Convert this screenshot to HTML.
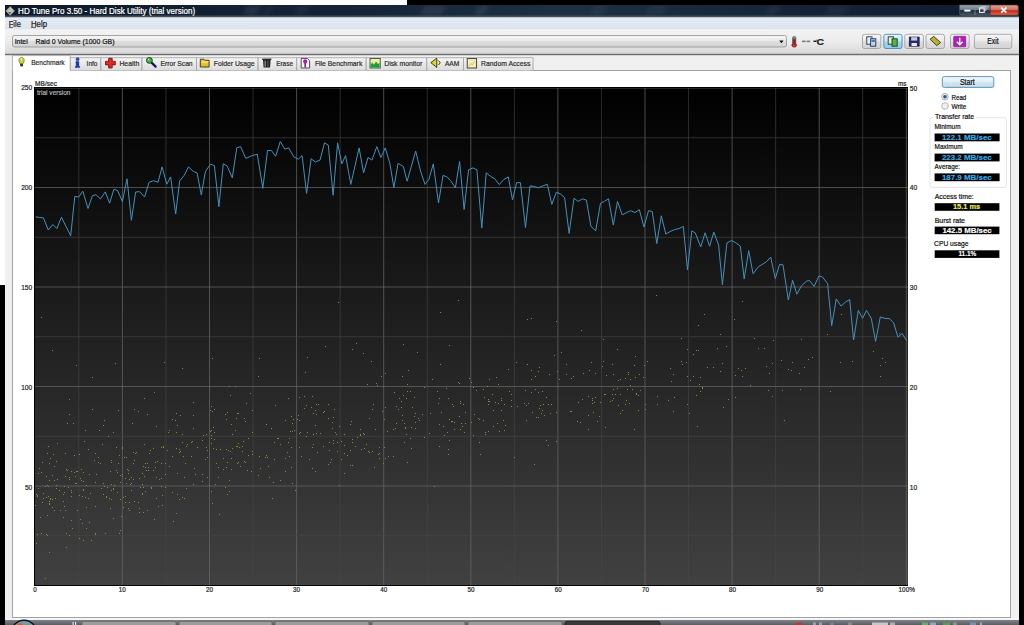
<!DOCTYPE html>
<html><head><meta charset="utf-8">
<style>
html,body{margin:0;padding:0;width:1024px;height:625px;overflow:hidden;background:#fff;}
svg text{font-family:"Liberation Sans",sans-serif;}
</style></head><body>
<svg width="1024" height="625" viewBox="0 0 1024 625" style="position:absolute;left:0;top:0">
<defs>
<linearGradient id="tb" x1="0" y1="0" x2="1" y2="0">
 <stop offset="0" stop-color="#0e1a2a"/><stop offset="0.35" stop-color="#15243a"/><stop offset="0.55" stop-color="#1e3044"/><stop offset="0.8" stop-color="#14233a"/><stop offset="1" stop-color="#101c2e"/>
</linearGradient>
<linearGradient id="menu" x1="0" y1="0" x2="0" y2="1"><stop offset="0" stop-color="#e4ebf3"/><stop offset="1" stop-color="#dbe3ec"/></linearGradient>
<linearGradient id="tool" x1="0" y1="0" x2="0" y2="1"><stop offset="0" stop-color="#f3f3f3"/><stop offset="0.5" stop-color="#ececec"/><stop offset="1" stop-color="#d9d9d9"/></linearGradient>
<linearGradient id="btn" x1="0" y1="0" x2="0" y2="1"><stop offset="0" stop-color="#f6f6f6"/><stop offset="0.5" stop-color="#e9e9e9"/><stop offset="0.51" stop-color="#dedede"/><stop offset="1" stop-color="#d2d2d2"/></linearGradient>
<linearGradient id="btnb" x1="0" y1="0" x2="0" y2="1"><stop offset="0" stop-color="#e5f4fc"/><stop offset="0.5" stop-color="#c4e5f6"/><stop offset="0.51" stop-color="#a9d9f2"/><stop offset="1" stop-color="#8fcaec"/></linearGradient>
<linearGradient id="tab" x1="0" y1="0" x2="0" y2="1"><stop offset="0" stop-color="#f4f4f4"/><stop offset="1" stop-color="#dcdcdc"/></linearGradient>
<linearGradient id="start" x1="0" y1="0" x2="0" y2="1"><stop offset="0" stop-color="#f2f8fb"/><stop offset="0.5" stop-color="#e0eef5"/><stop offset="0.51" stop-color="#d2e6f0"/><stop offset="1" stop-color="#c4dde9"/></linearGradient>
<linearGradient id="close" x1="0" y1="0" x2="0" y2="1"><stop offset="0" stop-color="#e0a8a0"/><stop offset="0.45" stop-color="#d07060"/><stop offset="0.55" stop-color="#c02c18"/><stop offset="1" stop-color="#d86a50"/></linearGradient>
<linearGradient id="capb" x1="0" y1="0" x2="0" y2="1"><stop offset="0" stop-color="#a0acb8"/><stop offset="0.45" stop-color="#6a7888"/><stop offset="0.55" stop-color="#1e2a38"/><stop offset="1" stop-color="#4a5868"/></linearGradient>
<linearGradient id="task" x1="0" y1="0" x2="0" y2="1"><stop offset="0" stop-color="#80848a"/><stop offset="1" stop-color="#5a5c60"/></linearGradient>
</defs>
<!-- background pieces -->
<rect x="407" y="0" width="617" height="5" fill="#000"/>
<rect x="1019" y="0" width="5" height="625" fill="#000"/>
<rect x="0" y="285" width="5" height="340" fill="#000"/>
<!-- window -->
<rect x="5" y="5" width="1014" height="614" fill="#f0f0f0"/>
<rect x="5" y="5" width="1014" height="11" fill="url(#tb)"/>
<rect x="5" y="15.5" width="1014" height="2" fill="#44525f"/>
<rect x="5" y="17.5" width="1014" height="12" fill="url(#menu)"/>
<rect x="5" y="29.5" width="1014" height="24" fill="url(#tool)"/>
<rect x="5" y="53.7" width="1014" height="1.4" fill="#6e6e6e"/>
<rect x="5" y="55.1" width="1014" height="0.8" fill="#d0d0d0"/>
<!-- title -->
<defs><filter id="bl" x="-50%" y="-50%" width="200%" height="200%"><feGaussianBlur stdDeviation="2"/></filter><clipPath id="tbc"><rect x="5" y="5" width="1014" height="10.5"/></clipPath></defs><g clip-path="url(#tbc)"><g filter="url(#bl)"><path d="M248 5 h14 l-6 10.5 h-14 z" fill="#fff" fill-opacity="0.07"/><path d="M268 5 h6 l-6 10.5 h-6 z" fill="#fff" fill-opacity="0.04"/><path d="M300 5 h10 l-6 10.5 h-10 z" fill="#fff" fill-opacity="0.04"/><path d="M425 5 h22 l-6 10.5 h-22 z" fill="#fff" fill-opacity="0.07"/><path d="M480 5 h10 l-6 10.5 h-10 z" fill="#fff" fill-opacity="0.07"/><path d="M595 5 h14 l-6 10.5 h-14 z" fill="#fff" fill-opacity="0.04"/><path d="M650 5 h18 l-6 10.5 h-18 z" fill="#fff" fill-opacity="0.04"/><path d="M770 5 h12 l-6 10.5 h-12 z" fill="#fff" fill-opacity="0.04"/><path d="M830 5 h20 l-6 10.5 h-20 z" fill="#fff" fill-opacity="0.04"/></g></g>
<path d="M10.2 6.3 L14.8 10.9 L10.2 15.6 L5.6 10.9 Z" fill="#a8b4c0"/><path d="M10.6 7.6 L13.6 10.6 L10.2 13.6 L7.6 11.2 Z" fill="#cfc2a8"/><path d="M8.2 12.2 L10.8 12 L10 13.8 Z" fill="#3a3020"/>
<text x="18.1" y="13.8" font-size="8.8" fill="#fff" textLength="177" lengthAdjust="spacingAndGlyphs" stroke="#fff" stroke-width="0.22">HD Tune Pro 3.50 - Hard Disk Utility (trial version)</text>
<!-- caption buttons -->
<path d="M959.5 5 H990.2 V15.3 H961.5 Q959.5 15.3 959.5 13.3 Z" fill="url(#capb)" stroke="#4a5868" stroke-width="0.7"/>
<line x1="975" y1="5.3" x2="975" y2="15" stroke="#8a98a8" stroke-width="0.7"/>
<rect x="964.3" y="9.6" width="6.2" height="2" fill="#f4f4f4"/>
<rect x="979.6" y="8" width="4.6" height="4.4" fill="none" stroke="#f0f0f0" stroke-width="1.1"/>
<path d="M981.4 8 V6.6 H986 V10.6 H984.2" fill="none" stroke="#d0d0d0" stroke-width="0.8"/>
<path d="M990.2 5 H1016.3 Q1018.3 5 1018.3 7 V13.3 Q1018.3 15.3 1016.3 15.3 H990.2 Z" fill="url(#close)" stroke="#5a3030" stroke-width="0.7"/>
<path d="M1001.2 7.6 L1006.4 12.6 M1006.4 7.6 L1001.2 12.6" stroke="#fff" stroke-width="1.7"/>
<!-- menu -->
<text x="8.8" y="26.6" font-size="8.2" fill="#222" textLength="12" lengthAdjust="spacingAndGlyphs" stroke="#222" stroke-width="0.22">File</text>
<text x="31" y="26.6" font-size="8.2" fill="#222" textLength="16" lengthAdjust="spacingAndGlyphs" stroke="#222" stroke-width="0.22">Help</text>
<rect x="9" y="27.2" width="4" height="0.7" fill="#333"/>
<rect x="31" y="27.2" width="5" height="0.7" fill="#333"/>
<!-- combo -->
<rect x="12.5" y="35.5" width="774" height="11.5" rx="2" fill="url(#btn)" stroke="#8e8f8f" stroke-width="0.8"/>
<text x="14.7" y="43.8" font-size="8" fill="#111" textLength="13" lengthAdjust="spacingAndGlyphs" stroke="#111" stroke-width="0.22">Intel</text>
<text x="35.5" y="43.8" font-size="8" fill="#111" textLength="79" lengthAdjust="spacingAndGlyphs" stroke="#111" stroke-width="0.22">Raid 0 Volume (1000 GB)</text>
<path d="M779.2 40.6 L783.6 40.6 L781.4 43.2 Z" fill="#111"/>
<!-- thermometer -->
<defs><linearGradient id="therm" x1="0" y1="0" x2="0" y2="1"><stop offset="0" stop-color="#9ab8b0"/><stop offset="0.35" stop-color="#3a4a48"/><stop offset="0.5" stop-color="#a02020"/><stop offset="1" stop-color="#c82020"/></linearGradient></defs>
<path d="M792.6 37.8 Q792.6 36.4 794.2 36.4 Q795.8 36.4 795.8 37.8 V43.6 Q797 44.6 796.6 45.8 Q796 47.2 794.2 47.2 Q792.2 47.2 791.8 45.6 Q791.6 44.4 792.6 43.6 Z" fill="url(#therm)" stroke="#402020" stroke-width="0.5"/>
<circle cx="793.8" cy="45.4" r="0.7" fill="#f06060"/>
<rect x="802" y="40.6" width="3.6" height="1.6" fill="#7a7a7a"/><rect x="806.6" y="40.6" width="3.6" height="1.6" fill="#7a7a7a"/>
<rect x="813.4" y="40.6" width="3" height="1.4" fill="#222"/><path d="M815.4 40.3 L816.6 39.6 L816.6 41 Z" fill="#222"/>
<text x="816.6" y="44.6" font-size="9.6" font-weight="bold" fill="#1a1a1a" textLength="7.6" lengthAdjust="spacingAndGlyphs" stroke="#1a1a1a" stroke-width="0.15">C</text>
<!-- toolbar buttons -->
<g stroke="#9a9a9a" stroke-width="0.8">
<rect x="862.5" y="34.3" width="18.3" height="14.2" rx="2" fill="url(#btn)"/>
<rect x="883.8" y="34.3" width="18.3" height="14.2" rx="2" fill="url(#btnb)" stroke="#3c7fb1"/>
<rect x="904.8" y="34.3" width="18.6" height="14.2" rx="2" fill="url(#btn)"/>
<rect x="926" y="34.3" width="18.5" height="14.2" rx="2" fill="url(#btn)"/>
<rect x="950.5" y="34.3" width="18.7" height="14.2" rx="2" fill="url(#btn)"/>
<rect x="974.4" y="34.3" width="37.4" height="14.2" rx="2" fill="url(#btn)"/>
</g>
<!-- icons in toolbar -->
<rect x="866.8" y="36.8" width="5.2" height="7.4" fill="#f0f4fa" stroke="#1e2e50" stroke-width="0.9"/>
<rect x="870.6" y="38.8" width="5.2" height="7.4" fill="#b8d4f0" stroke="#1e2e50" stroke-width="0.9"/>
<rect x="871.5" y="40" width="3.4" height="2" fill="#4a7ac0"/>
<rect x="888.2" y="36.8" width="5.2" height="7.4" fill="#e0f4d8" stroke="#1e3a20" stroke-width="0.9"/>
<rect x="892" y="38.8" width="5.2" height="7.4" fill="#5ab04a" stroke="#1e3a20" stroke-width="0.9"/>
<rect x="909.2" y="37" width="10" height="9.2" fill="#2a2a70" stroke="#101030" stroke-width="0.6"/>
<rect x="911.2" y="37.2" width="6" height="3.4" fill="#c8c8e0"/>
<rect x="911.5" y="43" width="5.4" height="3" fill="#e8e8f0"/>
<path d="M930 39.2 L933.8 36.4 L940.6 42.6 L936.8 45.6 Z" fill="#b8b030" stroke="#3a3410" stroke-width="0.9"/>
<rect x="953.6" y="36.2" width="12.2" height="10.6" rx="0.8" fill="#b020b8" stroke="#6a1070" stroke-width="0.5"/>
<path d="M959.7 37.8 V44.6 M956.8 41.8 L959.7 44.8 L962.6 41.8" stroke="#fff" stroke-width="1.4" fill="none"/>
<text x="987.3" y="44.3" font-size="8.5" fill="#111" textLength="11.2" lengthAdjust="spacingAndGlyphs" stroke="#111" stroke-width="0.22">Exit</text>
<!-- tab panel -->
<rect x="12.5" y="70.5" width="998" height="547" fill="#fff" stroke="#a2a2a2" stroke-width="1"/>
<!-- tabs -->
<g stroke="#a0a0a0" stroke-width="0.8" fill="url(#tab)">
<path d="M70.2 70.5 V57.7 H100.9 V70.5"/>
<path d="M100.9 70.5 V57.7 H142 V70.5"/>
<path d="M142 70.5 V57.7 H196.5 V70.5"/>
<path d="M196.5 70.5 V57.7 H258.1 V70.5"/>
<path d="M258.1 70.5 V57.7 H296.7 V70.5"/>
<path d="M296.7 70.5 V57.7 H366.2 V70.5"/>
<path d="M366.2 70.5 V57.7 H426.8 V70.5"/>
<path d="M426.8 70.5 V57.7 H463.5 V70.5"/>
<path d="M463.5 70.5 V57.7 H533.1 V70.5"/>
</g>
<path d="M12.5 71 V55.6 H70.2 V71" fill="#fff" stroke="#a2a2a2" stroke-width="0.8"/>
<rect x="13" y="69.5" width="56.8" height="2" fill="#fff"/>
<path d="M21.6 57.4 C24.4 57.4 24.8 60.8 23.6 62.6 L22.8 64 H20.4 L19.6 62.6 C18.4 60.8 18.8 57.4 21.6 57.4 Z" fill="#c8d040" stroke="#5a6010" stroke-width="0.6"/>
<path d="M20.6 58.6 C21.2 58.2 22 58.2 22.4 58.8 L21.2 61.5 Z" fill="#f0f4a0"/>
<rect x="20.2" y="63.8" width="2.8" height="2.6" rx="0.8" fill="#2e3410"/>
<circle cx="77.6" cy="59.2" r="1.6" fill="#3050c8" stroke="#102080" stroke-width="0.4"/>
<path d="M76 61.4 H78.9 V66.2 L79.8 66.6 V67.6 H75.2 V66.6 L76.1 66.2 V62.6 L75.6 62.2 Z" fill="#1838c0" stroke="#0a1870" stroke-width="0.4"/>
<path d="M108.6 58.3 h3.6 v3 h3.1 v3.6 h-3.1 v3.1 h-3.6 v-3.1 h-3.1 v-3.6 h3.1 z" fill="#e02828" stroke="#6a0c0c" stroke-width="0.8"/>
<path d="M151.6 62.6 L155.6 66.6" stroke="#101860" stroke-width="2.2" stroke-linecap="round"/>
<circle cx="149.4" cy="60.4" r="2.9" fill="#40b838" stroke="#0e3a18" stroke-width="0.9"/>
<circle cx="148.6" cy="59.6" r="0.9" fill="#b8f0a8"/>
<path d="M200.3 59.2 h3.6 l1 1 h4.2 v6.8 h-8.8 z" fill="#e0c028" stroke="#3a3008" stroke-width="0.9"/>
<rect x="201.2" y="61.2" width="7" height="2" fill="#f0dc70"/>
<path d="M262.2 58.6 H271.4 V60 H262.2 Z" fill="#2a2a2a"/>
<path d="M263 60 H270.6 L270 67.6 H263.6 Z" fill="#1e1e1e"/>
<rect x="264.6" y="60.6" width="1.2" height="6.2" fill="#9a9a9a"/><rect x="267.4" y="60.6" width="1" height="6.2" fill="#6a6a6a"/>
<path d="M301.2 58.4 H307.4 L309.6 60.6 V68 H301.2 Z" fill="#f4f4f4" stroke="#2a2a2a" stroke-width="0.8"/>
<ellipse cx="305.2" cy="61.4" rx="2.1" ry="2.2" fill="#a028a8"/><path d="M304.4 63 H306 V67.6 H304.4 Z" fill="#8a1890"/>
<rect x="370" y="58.4" width="10.2" height="9.6" fill="#f0f0a0" stroke="#2a3a2a" stroke-width="0.8"/>
<path d="M370.6 67.6 V64.6 L372.4 62.4 L374 64.8 L376 61.6 L378 64 L379.6 62.8 V67.6 Z" fill="#18a040"/>
<path d="M430.8 62.6 L436.8 58.2 V67.4 Z" fill="#d8d828" stroke="#2a2a08" stroke-width="0.9"/>
<path d="M438.6 60.6 L440.2 62.8 L438.6 65" stroke="#3a3a20" stroke-width="1" fill="none"/>
<rect x="467.2" y="58.6" width="9.4" height="9.4" fill="#f4ecc0" stroke="#3a3420" stroke-width="0.9"/>
<path d="M468.8 66.2 L470.8 63.6 L472.6 64.6 L475 61" stroke="#c8a838" stroke-width="0.7" fill="none"/>
<g font-size="8" fill="#2a2a2a" stroke="#2a2a2a" stroke-width="0.2">
<text x="31.2" y="65" textLength="33.5" lengthAdjust="spacingAndGlyphs">Benchmark</text>
<text x="86.6" y="66" textLength="10.9" lengthAdjust="spacingAndGlyphs">Info</text>
<text x="119.4" y="66" textLength="19.8" lengthAdjust="spacingAndGlyphs">Health</text>
<text x="160.5" y="66" textLength="32.1" lengthAdjust="spacingAndGlyphs">Error Scan</text>
<text x="213.8" y="66" textLength="40.8" lengthAdjust="spacingAndGlyphs">Folder Usage</text>
<text x="276.2" y="66" textLength="16.8" lengthAdjust="spacingAndGlyphs">Erase</text>
<text x="314.9" y="66" textLength="47.4" lengthAdjust="spacingAndGlyphs">File Benchmark</text>
<text x="384.2" y="66" textLength="38.1" lengthAdjust="spacingAndGlyphs">Disk monitor</text>
<text x="444.9" y="66" textLength="14.4" lengthAdjust="spacingAndGlyphs">AAM</text>
<text x="481.1" y="66" textLength="49.3" lengthAdjust="spacingAndGlyphs">Random Access</text>
</g>
<defs><linearGradient id="cg" x1="0" y1="0" x2="0" y2="1"><stop offset="0" stop-color="#000"/><stop offset="1" stop-color="#414141"/></linearGradient></defs>
<rect x="34" y="87" width="874" height="499" fill="url(#cg)"/>
<line x1="78.85" y1="87" x2="78.85" y2="586" stroke="#484848" stroke-opacity="0.6" stroke-width="1"/>
<line x1="122.40" y1="87" x2="122.40" y2="586" stroke="#666666" stroke-opacity="0.72" stroke-width="1"/>
<line x1="165.95" y1="87" x2="165.95" y2="586" stroke="#484848" stroke-opacity="0.6" stroke-width="1"/>
<line x1="209.50" y1="87" x2="209.50" y2="586" stroke="#666666" stroke-opacity="0.72" stroke-width="1"/>
<line x1="253.05" y1="87" x2="253.05" y2="586" stroke="#484848" stroke-opacity="0.6" stroke-width="1"/>
<line x1="296.60" y1="87" x2="296.60" y2="586" stroke="#666666" stroke-opacity="0.72" stroke-width="1"/>
<line x1="340.15" y1="87" x2="340.15" y2="586" stroke="#484848" stroke-opacity="0.6" stroke-width="1"/>
<line x1="383.70" y1="87" x2="383.70" y2="586" stroke="#666666" stroke-opacity="0.72" stroke-width="1"/>
<line x1="427.25" y1="87" x2="427.25" y2="586" stroke="#484848" stroke-opacity="0.6" stroke-width="1"/>
<line x1="470.80" y1="87" x2="470.80" y2="586" stroke="#666666" stroke-opacity="0.72" stroke-width="1"/>
<line x1="514.35" y1="87" x2="514.35" y2="586" stroke="#484848" stroke-opacity="0.6" stroke-width="1"/>
<line x1="557.90" y1="87" x2="557.90" y2="586" stroke="#666666" stroke-opacity="0.72" stroke-width="1"/>
<line x1="601.45" y1="87" x2="601.45" y2="586" stroke="#484848" stroke-opacity="0.6" stroke-width="1"/>
<line x1="645.00" y1="87" x2="645.00" y2="586" stroke="#666666" stroke-opacity="0.72" stroke-width="1"/>
<line x1="688.55" y1="87" x2="688.55" y2="586" stroke="#484848" stroke-opacity="0.6" stroke-width="1"/>
<line x1="732.10" y1="87" x2="732.10" y2="586" stroke="#666666" stroke-opacity="0.72" stroke-width="1"/>
<line x1="775.65" y1="87" x2="775.65" y2="586" stroke="#484848" stroke-opacity="0.6" stroke-width="1"/>
<line x1="819.20" y1="87" x2="819.20" y2="586" stroke="#666666" stroke-opacity="0.72" stroke-width="1"/>
<line x1="862.75" y1="87" x2="862.75" y2="586" stroke="#484848" stroke-opacity="0.6" stroke-width="1"/>
<line x1="906.30" y1="87" x2="906.30" y2="586" stroke="#666666" stroke-opacity="0.72" stroke-width="1"/>
<line x1="34" y1="535.75" x2="908" y2="535.75" stroke="#484848" stroke-opacity="0.6" stroke-width="1"/>
<line x1="34" y1="486.00" x2="908" y2="486.00" stroke="#666666" stroke-opacity="0.72" stroke-width="1"/>
<line x1="34" y1="436.25" x2="908" y2="436.25" stroke="#484848" stroke-opacity="0.6" stroke-width="1"/>
<line x1="34" y1="386.50" x2="908" y2="386.50" stroke="#666666" stroke-opacity="0.72" stroke-width="1"/>
<line x1="34" y1="336.75" x2="908" y2="336.75" stroke="#484848" stroke-opacity="0.6" stroke-width="1"/>
<line x1="34" y1="287.00" x2="908" y2="287.00" stroke="#666666" stroke-opacity="0.72" stroke-width="1"/>
<line x1="34" y1="237.25" x2="908" y2="237.25" stroke="#484848" stroke-opacity="0.6" stroke-width="1"/>
<line x1="34" y1="187.50" x2="908" y2="187.50" stroke="#666666" stroke-opacity="0.72" stroke-width="1"/>
<line x1="34" y1="137.75" x2="908" y2="137.75" stroke="#484848" stroke-opacity="0.6" stroke-width="1"/>
<line x1="34" y1="88.00" x2="908" y2="88.00" stroke="#666666" stroke-opacity="0.72" stroke-width="1"/>
<path d="M63 517h1v1h-1zM41 533h1v1h-1zM81 480h1v1h-1zM79 495h1v1h-1zM38 488h1v1h-1zM42 502h1v1h-1zM71 496h1v1h-1zM54 480h1v1h-1zM89 522h1v1h-1zM69 477h1v1h-1zM119 533h1v1h-1zM60 510h1v1h-1zM47 515h1v1h-1zM106 497h1v1h-1zM50 458h1v1h-1zM67 470h1v1h-1zM82 496h1v1h-1zM52 499h1v1h-1zM94 460h1v1h-1zM85 497h1v1h-1zM74 472h1v1h-1zM95 533h1v1h-1zM56 461h1v1h-1zM111 462h1v1h-1zM98 462h1v1h-1zM45 578h1v1h-1zM71 490h1v1h-1zM77 471h1v1h-1zM38 473h1v1h-1zM84 441h1v1h-1zM111 460h1v1h-1zM86 528h1v1h-1zM85 430h1v1h-1zM117 492h1v1h-1zM76 483h1v1h-1zM96 474h1v1h-1zM91 540h1v1h-1zM59 490h1v1h-1zM68 487h1v1h-1zM75 483h1v1h-1zM49 503h1v1h-1zM101 488h1v1h-1zM46 497h1v1h-1zM110 508h1v1h-1zM42 462h1v1h-1zM111 490h1v1h-1zM106 496h1v1h-1zM71 471h1v1h-1zM66 547h1v1h-1zM48 446h1v1h-1zM50 498h1v1h-1zM77 510h1v1h-1zM86 485h1v1h-1zM71 492h1v1h-1zM67 423h1v1h-1zM95 453h1v1h-1zM79 454h1v1h-1zM39 468h1v1h-1zM113 489h1v1h-1zM104 420h1v1h-1zM69 479h1v1h-1zM90 493h1v1h-1zM40 517h1v1h-1zM49 504h1v1h-1zM64 492h1v1h-1zM48 496h1v1h-1zM43 493h1v1h-1zM111 484h1v1h-1zM88 498h1v1h-1zM65 510h1v1h-1zM66 533h1v1h-1zM121 516h1v1h-1zM75 476h1v1h-1zM43 498h1v1h-1zM64 486h1v1h-1zM49 552h1v1h-1zM37 534h1v1h-1zM47 485h1v1h-1zM82 523h1v1h-1zM120 482h1v1h-1zM110 471h1v1h-1zM66 469h1v1h-1zM49 501h1v1h-1zM102 444h1v1h-1zM63 501h1v1h-1zM120 530h1v1h-1zM109 498h1v1h-1zM99 430h1v1h-1zM54 466h1v1h-1zM37 496h1v1h-1zM37 495h1v1h-1zM95 506h1v1h-1zM118 410h1v1h-1zM120 499h1v1h-1zM118 463h1v1h-1zM54 510h1v1h-1zM52 507h1v1h-1zM113 518h1v1h-1zM108 436h1v1h-1zM104 486h1v1h-1zM42 462h1v1h-1zM103 425h1v1h-1zM100 463h1v1h-1zM103 483h1v1h-1zM63 517h1v1h-1zM69 414h1v1h-1zM69 535h1v1h-1zM49 480h1v1h-1zM46 534h1v1h-1zM105 533h1v1h-1zM47 535h1v1h-1zM92 409h1v1h-1zM65 476h1v1h-1zM36 494h1v1h-1zM119 455h1v1h-1zM116 447h1v1h-1zM72 528h1v1h-1zM53 454h1v1h-1zM56 488h1v1h-1zM86 507h1v1h-1zM57 479h1v1h-1zM114 485h1v1h-1zM65 453h1v1h-1zM113 488h1v1h-1zM71 520h1v1h-1zM81 469h1v1h-1zM80 519h1v1h-1zM50 499h1v1h-1zM35 505h1v1h-1zM76 471h1v1h-1zM98 457h1v1h-1zM80 478h1v1h-1zM83 489h1v1h-1zM83 472h1v1h-1zM56 485h1v1h-1zM79 538h1v1h-1zM83 490h1v1h-1zM73 423h1v1h-1zM88 449h1v1h-1zM95 482h1v1h-1zM74 455h1v1h-1zM116 470h1v1h-1zM95 534h1v1h-1zM57 443h1v1h-1zM83 540h1v1h-1zM46 476h1v1h-1zM45 486h1v1h-1zM55 498h1v1h-1zM41 472h1v1h-1zM113 432h1v1h-1zM48 486h1v1h-1zM47 453h1v1h-1zM111 499h1v1h-1zM117 472h1v1h-1zM69 399h1v1h-1zM107 487h1v1h-1zM49 463h1v1h-1zM64 506h1v1h-1zM52 475h1v1h-1zM36 543h1v1h-1zM83 481h1v1h-1zM63 494h1v1h-1zM89 474h1v1h-1zM120 475h1v1h-1zM103 494h1v1h-1zM145 467h1v1h-1zM125 478h1v1h-1zM133 452h1v1h-1zM158 506h1v1h-1zM144 444h1v1h-1zM134 501h1v1h-1zM182 442h1v1h-1zM129 510h1v1h-1zM159 479h1v1h-1zM128 508h1v1h-1zM191 442h1v1h-1zM129 479h1v1h-1zM197 447h1v1h-1zM161 447h1v1h-1zM202 481h1v1h-1zM145 491h1v1h-1zM142 493h1v1h-1zM131 477h1v1h-1zM139 478h1v1h-1zM149 453h1v1h-1zM147 510h1v1h-1zM165 474h1v1h-1zM123 497h1v1h-1zM143 512h1v1h-1zM169 466h1v1h-1zM138 411h1v1h-1zM131 483h1v1h-1zM193 428h1v1h-1zM194 468h1v1h-1zM156 426h1v1h-1zM207 450h1v1h-1zM151 487h1v1h-1zM177 425h1v1h-1zM157 461h1v1h-1zM133 479h1v1h-1zM128 473h1v1h-1zM136 452h1v1h-1zM129 502h1v1h-1zM180 415h1v1h-1zM146 470h1v1h-1zM161 486h1v1h-1zM135 453h1v1h-1zM205 459h1v1h-1zM206 434h1v1h-1zM206 447h1v1h-1zM148 467h1v1h-1zM155 467h1v1h-1zM163 447h1v1h-1zM165 463h1v1h-1zM122 474h1v1h-1zM156 477h1v1h-1zM125 496h1v1h-1zM142 473h1v1h-1zM172 419h1v1h-1zM179 452h1v1h-1zM184 477h1v1h-1zM150 450h1v1h-1zM207 477h1v1h-1zM177 494h1v1h-1zM125 502h1v1h-1zM176 413h1v1h-1zM185 463h1v1h-1zM167 450h1v1h-1zM165 487h1v1h-1zM193 415h1v1h-1zM172 492h1v1h-1zM182 434h1v1h-1zM142 484h1v1h-1zM153 470h1v1h-1zM131 490h1v1h-1zM176 432h1v1h-1zM176 448h1v1h-1zM122 448h1v1h-1zM191 456h1v1h-1zM168 432h1v1h-1zM179 499h1v1h-1zM143 487h1v1h-1zM128 470h1v1h-1zM139 512h1v1h-1zM186 488h1v1h-1zM155 462h1v1h-1zM163 446h1v1h-1zM175 420h1v1h-1zM177 473h1v1h-1zM144 476h1v1h-1zM186 446h1v1h-1zM123 507h1v1h-1zM127 469h1v1h-1zM182 497h1v1h-1zM180 451h1v1h-1zM162 495h1v1h-1zM162 505h1v1h-1zM139 508h1v1h-1zM207 457h1v1h-1zM161 463h1v1h-1zM193 484h1v1h-1zM145 463h1v1h-1zM140 487h1v1h-1zM172 456h1v1h-1zM134 409h1v1h-1zM133 463h1v1h-1zM193 402h1v1h-1zM183 456h1v1h-1zM142 494h1v1h-1zM124 457h1v1h-1zM122 447h1v1h-1zM148 470h1v1h-1zM134 460h1v1h-1zM195 474h1v1h-1zM122 476h1v1h-1zM132 423h1v1h-1zM202 440h1v1h-1zM147 414h1v1h-1zM154 392h1v1h-1zM173 521h1v1h-1zM153 448h1v1h-1zM126 483h1v1h-1zM130 484h1v1h-1zM203 435h1v1h-1zM143 466h1v1h-1zM138 502h1v1h-1zM154 519h1v1h-1zM192 441h1v1h-1zM176 513h1v1h-1zM169 430h1v1h-1zM184 498h1v1h-1zM161 478h1v1h-1zM187 444h1v1h-1zM126 457h1v1h-1zM202 474h1v1h-1zM151 488h1v1h-1zM147 463h1v1h-1zM144 398h1v1h-1zM179 449h1v1h-1zM156 498h1v1h-1zM223 458h1v1h-1zM287 452h1v1h-1zM252 454h1v1h-1zM295 490h1v1h-1zM248 455h1v1h-1zM216 463h1v1h-1zM238 462h1v1h-1zM231 458h1v1h-1zM258 475h1v1h-1zM244 418h1v1h-1zM245 421h1v1h-1zM238 443h1v1h-1zM214 439h1v1h-1zM219 514h1v1h-1zM252 410h1v1h-1zM227 412h1v1h-1zM232 448h1v1h-1zM247 470h1v1h-1zM291 467h1v1h-1zM210 410h1v1h-1zM211 438h1v1h-1zM250 393h1v1h-1zM260 468h1v1h-1zM289 438h1v1h-1zM280 480h1v1h-1zM230 395h1v1h-1zM218 467h1v1h-1zM268 466h1v1h-1zM290 431h1v1h-1zM275 405h1v1h-1zM248 438h1v1h-1zM277 438h1v1h-1zM229 480h1v1h-1zM235 430h1v1h-1zM220 449h1v1h-1zM269 477h1v1h-1zM218 477h1v1h-1zM259 456h1v1h-1zM242 451h1v1h-1zM209 485h1v1h-1zM235 386h1v1h-1zM265 457h1v1h-1zM285 420h1v1h-1zM230 451h1v1h-1zM292 431h1v1h-1zM210 431h1v1h-1zM252 432h1v1h-1zM231 424h1v1h-1zM267 457h1v1h-1zM211 443h1v1h-1zM238 413h1v1h-1zM226 467h1v1h-1zM278 438h1v1h-1zM226 419h1v1h-1zM293 419h1v1h-1zM229 491h1v1h-1zM228 450h1v1h-1zM291 416h1v1h-1zM252 451h1v1h-1zM245 462h1v1h-1zM266 455h1v1h-1zM243 441h1v1h-1zM227 462h1v1h-1zM213 448h1v1h-1zM214 409h1v1h-1zM285 471h1v1h-1zM272 498h1v1h-1zM237 446h1v1h-1zM225 487h1v1h-1zM211 435h1v1h-1zM266 424h1v1h-1zM237 463h1v1h-1zM223 469h1v1h-1zM239 447h1v1h-1zM292 483h1v1h-1zM227 494h1v1h-1zM240 466h1v1h-1zM246 403h1v1h-1zM213 427h1v1h-1zM288 442h1v1h-1zM225 414h1v1h-1zM211 491h1v1h-1zM244 461h1v1h-1zM212 411h1v1h-1zM212 503h1v1h-1zM231 469h1v1h-1zM274 459h1v1h-1zM232 434h1v1h-1zM292 423h1v1h-1zM271 428h1v1h-1zM236 446h1v1h-1zM274 442h1v1h-1zM288 398h1v1h-1zM211 406h1v1h-1zM229 386h1v1h-1zM291 447h1v1h-1zM242 446h1v1h-1zM251 471h1v1h-1zM289 456h1v1h-1zM273 482h1v1h-1zM280 444h1v1h-1zM237 413h1v1h-1zM236 418h1v1h-1zM215 484h1v1h-1zM226 449h1v1h-1zM214 432h1v1h-1zM211 430h1v1h-1zM294 430h1v1h-1zM285 458h1v1h-1zM216 449h1v1h-1zM304 396h1v1h-1zM335 432h1v1h-1zM316 404h1v1h-1zM355 446h1v1h-1zM361 449h1v1h-1zM306 405h1v1h-1zM369 418h1v1h-1zM328 464h1v1h-1zM360 434h1v1h-1zM317 452h1v1h-1zM309 459h1v1h-1zM324 411h1v1h-1zM330 462h1v1h-1zM316 433h1v1h-1zM367 384h1v1h-1zM305 372h1v1h-1zM337 451h1v1h-1zM376 383h1v1h-1zM299 433h1v1h-1zM312 447h1v1h-1zM381 376h1v1h-1zM328 404h1v1h-1zM372 409h1v1h-1zM364 434h1v1h-1zM379 453h1v1h-1zM350 450h1v1h-1zM315 425h1v1h-1zM313 444h1v1h-1zM318 404h1v1h-1zM313 413h1v1h-1zM297 419h1v1h-1zM312 468h1v1h-1zM323 446h1v1h-1zM344 473h1v1h-1zM301 456h1v1h-1zM344 445h1v1h-1zM352 442h1v1h-1zM357 437h1v1h-1zM332 428h1v1h-1zM379 447h1v1h-1zM323 412h1v1h-1zM332 422h1v1h-1zM372 451h1v1h-1zM313 434h1v1h-1zM360 429h1v1h-1zM375 429h1v1h-1zM333 443h1v1h-1zM373 404h1v1h-1zM336 434h1v1h-1zM344 434h1v1h-1zM352 439h1v1h-1zM350 424h1v1h-1zM328 418h1v1h-1zM320 433h1v1h-1zM341 441h1v1h-1zM339 426h1v1h-1zM366 444h1v1h-1zM307 432h1v1h-1zM378 454h1v1h-1zM300 432h1v1h-1zM377 385h1v1h-1zM350 465h1v1h-1zM368 451h1v1h-1zM315 471h1v1h-1zM331 459h1v1h-1zM312 396h1v1h-1zM315 410h1v1h-1zM329 450h1v1h-1zM306 436h1v1h-1zM374 467h1v1h-1zM299 397h1v1h-1zM299 420h1v1h-1zM369 452h1v1h-1zM344 453h1v1h-1zM351 421h1v1h-1zM347 455h1v1h-1zM333 417h1v1h-1zM334 409h1v1h-1zM298 415h1v1h-1zM316 414h1v1h-1zM363 433h1v1h-1zM311 407h1v1h-1zM337 442h1v1h-1zM333 440h1v1h-1zM304 408h1v1h-1zM299 447h1v1h-1zM352 465h1v1h-1zM364 448h1v1h-1zM341 459h1v1h-1zM329 442h1v1h-1zM379 458h1v1h-1zM383 463h1v1h-1zM360 435h1v1h-1zM382 411h1v1h-1zM339 485h1v1h-1zM398 409h1v1h-1zM452 421h1v1h-1zM414 416h1v1h-1zM449 440h1v1h-1zM407 462h1v1h-1zM454 429h1v1h-1zM464 432h1v1h-1zM402 420h1v1h-1zM411 448h1v1h-1zM387 431h1v1h-1zM465 423h1v1h-1zM443 426h1v1h-1zM452 404h1v1h-1zM394 392h1v1h-1zM415 413h1v1h-1zM459 383h1v1h-1zM460 401h1v1h-1zM393 456h1v1h-1zM418 418h1v1h-1zM453 406h1v1h-1zM434 486h1v1h-1zM415 422h1v1h-1zM399 398h1v1h-1zM448 454h1v1h-1zM406 434h1v1h-1zM439 446h1v1h-1zM441 412h1v1h-1zM411 427h1v1h-1zM396 423h1v1h-1zM437 391h1v1h-1zM461 423h1v1h-1zM395 428h1v1h-1zM385 458h1v1h-1zM384 419h1v1h-1zM415 428h1v1h-1zM403 395h1v1h-1zM401 407h1v1h-1zM438 403h1v1h-1zM465 412h1v1h-1zM405 428h1v1h-1zM439 424h1v1h-1zM459 416h1v1h-1zM406 398h1v1h-1zM385 407h1v1h-1zM414 397h1v1h-1zM440 364h1v1h-1zM447 432h1v1h-1zM405 427h1v1h-1zM430 413h1v1h-1zM419 420h1v1h-1zM451 421h1v1h-1zM385 373h1v1h-1zM396 406h1v1h-1zM401 401h1v1h-1zM439 398h1v1h-1zM454 422h1v1h-1zM410 438h1v1h-1zM388 456h1v1h-1zM446 388h1v1h-1zM384 447h1v1h-1zM424 387h1v1h-1zM448 398h1v1h-1zM393 429h1v1h-1zM404 442h1v1h-1zM449 419h1v1h-1zM444 435h1v1h-1zM407 391h1v1h-1zM432 379h1v1h-1zM429 433h1v1h-1zM407 384h1v1h-1zM402 376h1v1h-1zM460 429h1v1h-1zM404 423h1v1h-1zM448 449h1v1h-1zM412 407h1v1h-1zM460 403h1v1h-1zM462 426h1v1h-1zM438 403h1v1h-1zM469 378h1v1h-1zM424 437h1v1h-1zM458 382h1v1h-1zM422 414h1v1h-1zM410 391h1v1h-1zM402 415h1v1h-1zM463 404h1v1h-1zM483 420h1v1h-1zM551 404h1v1h-1zM501 410h1v1h-1zM474 414h1v1h-1zM531 379h1v1h-1zM535 376h1v1h-1zM476 390h1v1h-1zM542 391h1v1h-1zM542 410h1v1h-1zM546 397h1v1h-1zM550 413h1v1h-1zM488 404h1v1h-1zM480 454h1v1h-1zM541 413h1v1h-1zM526 420h1v1h-1zM496 377h1v1h-1zM479 442h1v1h-1zM488 431h1v1h-1zM498 403h1v1h-1zM493 410h1v1h-1zM495 402h1v1h-1zM498 384h1v1h-1zM554 355h1v1h-1zM524 403h1v1h-1zM473 387h1v1h-1zM538 417h1v1h-1zM501 398h1v1h-1zM489 379h1v1h-1zM546 440h1v1h-1zM485 432h1v1h-1zM471 422h1v1h-1zM556 441h1v1h-1zM471 382h1v1h-1zM540 405h1v1h-1zM487 386h1v1h-1zM543 404h1v1h-1zM493 426h1v1h-1zM489 401h1v1h-1zM531 392h1v1h-1zM526 405h1v1h-1zM478 418h1v1h-1zM539 367h1v1h-1zM525 390h1v1h-1zM505 425h1v1h-1zM548 445h1v1h-1zM473 435h1v1h-1zM488 404h1v1h-1zM514 457h1v1h-1zM503 420h1v1h-1zM511 394h1v1h-1zM517 406h1v1h-1zM527 364h1v1h-1zM501 400h1v1h-1zM544 415h1v1h-1zM528 403h1v1h-1zM509 391h1v1h-1zM538 392h1v1h-1zM511 400h1v1h-1zM548 404h1v1h-1zM497 423h1v1h-1zM532 412h1v1h-1zM484 397h1v1h-1zM492 394h1v1h-1zM485 434h1v1h-1zM499 431h1v1h-1zM534 464h1v1h-1zM479 419h1v1h-1zM504 404h1v1h-1zM556 412h1v1h-1zM508 369h1v1h-1zM488 401h1v1h-1zM488 399h1v1h-1zM504 430h1v1h-1zM539 408h1v1h-1zM531 370h1v1h-1zM511 406h1v1h-1zM483 389h1v1h-1zM535 389h1v1h-1zM549 374h1v1h-1zM536 417h1v1h-1zM594 402h1v1h-1zM634 429h1v1h-1zM625 378h1v1h-1zM617 349h1v1h-1zM613 374h1v1h-1zM612 400h1v1h-1zM566 364h1v1h-1zM620 413h1v1h-1zM612 394h1v1h-1zM597 421h1v1h-1zM612 364h1v1h-1zM638 410h1v1h-1zM573 376h1v1h-1zM591 362h1v1h-1zM600 402h1v1h-1zM605 394h1v1h-1zM571 411h1v1h-1zM603 339h1v1h-1zM566 374h1v1h-1zM620 379h1v1h-1zM602 366h1v1h-1zM603 361h1v1h-1zM593 412h1v1h-1zM617 388h1v1h-1zM592 398h1v1h-1zM643 377h1v1h-1zM588 415h1v1h-1zM592 403h1v1h-1zM559 379h1v1h-1zM618 405h1v1h-1zM588 396h1v1h-1zM622 410h1v1h-1zM639 374h1v1h-1zM627 389h1v1h-1zM592 400h1v1h-1zM625 404h1v1h-1zM628 374h1v1h-1zM606 375h1v1h-1zM577 421h1v1h-1zM613 389h1v1h-1zM629 403h1v1h-1zM583 373h1v1h-1zM605 427h1v1h-1zM588 429h1v1h-1zM632 389h1v1h-1zM580 422h1v1h-1zM595 397h1v1h-1zM620 394h1v1h-1zM582 399h1v1h-1zM599 416h1v1h-1zM595 373h1v1h-1zM589 370h1v1h-1zM638 395h1v1h-1zM630 385h1v1h-1zM636 393h1v1h-1zM630 379h1v1h-1zM613 398h1v1h-1zM640 390h1v1h-1zM615 394h1v1h-1zM570 411h1v1h-1zM578 402h1v1h-1zM571 378h1v1h-1zM636 394h1v1h-1zM635 377h1v1h-1zM610 401h1v1h-1zM635 356h1v1h-1zM626 400h1v1h-1zM618 380h1v1h-1zM604 394h1v1h-1zM634 365h1v1h-1zM693 376h1v1h-1zM657 404h1v1h-1zM687 404h1v1h-1zM657 396h1v1h-1zM687 349h1v1h-1zM720 371h1v1h-1zM645 404h1v1h-1zM693 354h1v1h-1zM702 387h1v1h-1zM681 361h1v1h-1zM728 399h1v1h-1zM700 391h1v1h-1zM647 361h1v1h-1zM726 346h1v1h-1zM673 411h1v1h-1zM687 376h1v1h-1zM723 407h1v1h-1zM699 384h1v1h-1zM674 397h1v1h-1zM686 362h1v1h-1zM690 380h1v1h-1zM682 364h1v1h-1zM681 338h1v1h-1zM670 368h1v1h-1zM717 348h1v1h-1zM668 400h1v1h-1zM689 413h1v1h-1zM713 367h1v1h-1zM673 374h1v1h-1zM696 395h1v1h-1zM700 377h1v1h-1zM707 367h1v1h-1zM722 363h1v1h-1zM671 381h1v1h-1zM645 409h1v1h-1zM697 426h1v1h-1zM702 388h1v1h-1zM698 325h1v1h-1zM698 350h1v1h-1zM696 350h1v1h-1zM791 370h1v1h-1zM772 396h1v1h-1zM799 373h1v1h-1zM735 375h1v1h-1zM800 389h1v1h-1zM764 348h1v1h-1zM804 367h1v1h-1zM754 338h1v1h-1zM758 348h1v1h-1zM769 373h1v1h-1zM788 369h1v1h-1zM781 360h1v1h-1zM735 397h1v1h-1zM782 390h1v1h-1zM812 357h1v1h-1zM766 366h1v1h-1zM784 420h1v1h-1zM773 340h1v1h-1zM768 390h1v1h-1zM750 385h1v1h-1zM745 368h1v1h-1zM792 362h1v1h-1zM742 376h1v1h-1zM808 359h1v1h-1zM830 391h1v1h-1zM840 362h1v1h-1zM882 358h1v1h-1zM885 362h1v1h-1zM880 376h1v1h-1zM827 334h1v1h-1zM873 351h1v1h-1zM899 333h1v1h-1zM258 376h1v1h-1zM656 295h1v1h-1zM52 350h1v1h-1zM742 301h1v1h-1zM307 357h1v1h-1zM182 368h1v1h-1zM458 300h1v1h-1zM356 343h1v1h-1zM417 352h1v1h-1zM164 362h1v1h-1zM352 349h1v1h-1zM581 330h1v1h-1zM371 361h1v1h-1zM852 361h1v1h-1zM527 319h1v1h-1zM92 377h1v1h-1zM644 365h1v1h-1zM325 346h1v1h-1zM880 365h1v1h-1zM556 321h1v1h-1zM408 370h1v1h-1zM363 353h1v1h-1zM557 371h1v1h-1zM734 319h1v1h-1zM41 317h1v1h-1zM403 344h1v1h-1zM741 370h1v1h-1zM76 365h1v1h-1zM738 368h1v1h-1zM531 318h1v1h-1zM772 363h1v1h-1zM628 372h1v1h-1zM338 302h1v1h-1zM516 362h1v1h-1zM212 358h1v1h-1zM841 314h1v1h-1zM561 352h1v1h-1zM440 312h1v1h-1zM259 358h1v1h-1zM720 334h1v1h-1zM115 363h1v1h-1zM704 314h1v1h-1zM538 371h1v1h-1zM801 339h1v1h-1zM449 345h1v1h-1z" fill="#8a883c"/>
<polyline points="35.8,216.9 39.6,217.5 43.4,217.8 48.3,230.0 52.8,224.5 56.9,228.6 61.4,217.2 70.7,235.8 74.8,196.4 78.7,197.0 82.8,191.2 88.0,208.5 92.4,195.7 95.9,194.7 100.4,198.9 105.3,191.9 109.6,203.2 113.9,189.3 117.7,190.6 122.4,201.5 127.0,178.8 131.4,220.3 135.6,192.1 139.5,191.6 144.6,197.0 149.1,182.3 153.6,180.7 158.0,182.3 162.1,166.9 166.8,184.2 170.6,176.9 175.7,214.0 179.6,181.0 184.3,175.2 188.5,166.9 193.3,171.4 197.1,173.0 201.3,195.0 205.4,171.4 210.5,164.3 214.4,165.6 218.9,206.6 223.3,163.7 227.2,166.2 232.3,177.8 236.8,147.7 240.6,146.7 245.8,158.4 252.2,155.6 257.3,154.3 262.8,188.3 267.5,150.5 271.4,150.5 275.6,156.2 280.3,141.5 284.8,149.2 288.7,147.9 293.8,156.9 298.3,159.2 302.1,155.6 306.6,193.4 311.1,158.8 315.5,162.0 320.0,160.1 324.5,142.8 328.3,145.1 333.1,195.3 337.6,142.8 341.8,163.9 345.6,155.6 350.8,184.4 359.1,147.9 363.6,172.9 368.0,157.5 371.9,160.1 376.8,146.6 380.9,157.5 385.3,147.9 389.8,163.3 393.9,187.6 398.1,163.3 403.3,166.5 407.1,181.2 411.3,166.5 415.7,151.1 420.5,171.0 425.0,184.4 428.9,179.3 433.3,163.9 438.5,203.0 443.0,175.5 446.8,176.7 450.6,180.6 455.4,187.8 459.6,161.5 464.1,209.5 468.6,169.8 473.0,167.9 476.9,169.8 481.8,228.1 486.2,172.8 490.3,176.2 494.8,178.8 499.3,184.6 503.8,179.4 508.3,176.9 512.5,199.9 516.6,182.7 520.4,182.7 525.5,227.5 530.0,185.9 534.5,186.5 538.3,187.8 542.8,185.9 547.3,184.3 551.8,204.4 556.3,192.3 560.1,193.7 564.6,197.5 569.1,233.4 574.0,198.2 578.0,201.4 582.5,198.8 586.4,200.1 590.9,226.3 595.7,230.8 600.5,203.3 604.3,201.4 608.5,198.8 613.3,225.1 617.5,201.4 622.2,214.8 626.1,212.9 630.5,210.7 635.0,212.5 639.3,209.7 644.0,227.0 648.5,210.7 652.3,211.6 656.8,243.6 661.3,215.8 665.8,234.0 670.2,231.5 674.7,229.6 679.2,228.5 683.3,226.4 687.5,269.9 691.8,230.9 695.2,232.8 700.7,246.9 705.1,232.8 709.6,246.2 713.8,232.1 718.6,245.0 722.4,284.7 726.9,243.0 731.4,240.5 735.9,242.8 740.3,246.2 744.2,278.9 748.7,250.7 753.1,273.8 758.3,266.7 762.7,264.2 766.6,261.6 770.7,257.1 775.3,278.6 779.6,264.4 783.0,264.9 788.3,300.0 792.6,280.3 796.9,294.2 801.7,285.5 806.5,281.2 809.4,280.5 814.2,286.3 819.0,275.9 822.4,276.9 827.6,283.6 831.7,325.6 836.3,298.9 841.0,306.1 845.8,301.8 849.7,299.6 853.6,340.0 858.3,310.4 862.6,318.4 866.5,310.4 871.3,318.4 875.6,341.4 880.3,316.9 885.0,318.4 889.3,318.6 893.6,322.7 897.9,337.1 902.2,333.5 906.6,340.7" fill="none" stroke="#4690ba" stroke-width="1" stroke-linejoin="round"/>
<rect x="34" y="87" width="874" height="1" fill="#000"/>
<rect x="34" y="87" width="1" height="499" fill="#000"/>
<rect x="34" y="585" width="874" height="1" fill="#000"/>
<text x="35" y="86" font-size="7.5" fill="#222" textLength="22" lengthAdjust="spacingAndGlyphs" stroke="#222" stroke-width="0.22">MB/sec</text>
<text x="898" y="86" font-size="7.5" fill="#222" textLength="8.4" lengthAdjust="spacingAndGlyphs" stroke="#222" stroke-width="0.22">ms</text>
<text x="37" y="94.6" font-size="7.5" fill="#b0b0b0" textLength="33.5" lengthAdjust="spacingAndGlyphs" stroke="#b0b0b0" stroke-width="0.22">trial version</text>
<text x="21.2" y="90.3" font-size="8" fill="#222" textLength="11" lengthAdjust="spacingAndGlyphs" stroke="#222" stroke-width="0.22">250</text>
<text x="21.2" y="190.1" font-size="8" fill="#222" textLength="11" lengthAdjust="spacingAndGlyphs" stroke="#222" stroke-width="0.22">200</text>
<text x="21.2" y="289.9" font-size="8" fill="#222" textLength="11" lengthAdjust="spacingAndGlyphs" stroke="#222" stroke-width="0.22">150</text>
<text x="21.2" y="389.7" font-size="8" fill="#222" textLength="11" lengthAdjust="spacingAndGlyphs" stroke="#222" stroke-width="0.22">100</text>
<text x="24.9" y="489.5" font-size="8" fill="#222" textLength="7.3" lengthAdjust="spacingAndGlyphs" stroke="#222" stroke-width="0.22">50</text>
<text x="909.8" y="90.6" font-size="8" fill="#222" textLength="7.4" lengthAdjust="spacingAndGlyphs" stroke="#222" stroke-width="0.22">50</text>
<text x="909.8" y="190.39999999999998" font-size="8" fill="#222" textLength="7.4" lengthAdjust="spacingAndGlyphs" stroke="#222" stroke-width="0.22">40</text>
<text x="909.8" y="290.2" font-size="8" fill="#222" textLength="7.4" lengthAdjust="spacingAndGlyphs" stroke="#222" stroke-width="0.22">30</text>
<text x="909.8" y="390.0" font-size="8" fill="#222" textLength="7.4" lengthAdjust="spacingAndGlyphs" stroke="#222" stroke-width="0.22">20</text>
<text x="909.8" y="489.79999999999995" font-size="8" fill="#222" textLength="7.4" lengthAdjust="spacingAndGlyphs" stroke="#222" stroke-width="0.22">10</text>
<text x="33.3" y="591.8" font-size="7.2" fill="#222" textLength="3.4" lengthAdjust="spacingAndGlyphs" stroke="#222" stroke-width="0.22">0</text>
<text x="118.7" y="591.8" font-size="7.2" fill="#222" textLength="7" lengthAdjust="spacingAndGlyphs" stroke="#222" stroke-width="0.22">10</text>
<text x="205.9" y="591.8" font-size="7.2" fill="#222" textLength="7" lengthAdjust="spacingAndGlyphs" stroke="#222" stroke-width="0.22">20</text>
<text x="293.1" y="591.8" font-size="7.2" fill="#222" textLength="7" lengthAdjust="spacingAndGlyphs" stroke="#222" stroke-width="0.22">30</text>
<text x="380.3" y="591.8" font-size="7.2" fill="#222" textLength="7" lengthAdjust="spacingAndGlyphs" stroke="#222" stroke-width="0.22">40</text>
<text x="467.5" y="591.8" font-size="7.2" fill="#222" textLength="7" lengthAdjust="spacingAndGlyphs" stroke="#222" stroke-width="0.22">50</text>
<text x="554.7" y="591.8" font-size="7.2" fill="#222" textLength="7" lengthAdjust="spacingAndGlyphs" stroke="#222" stroke-width="0.22">60</text>
<text x="641.9" y="591.8" font-size="7.2" fill="#222" textLength="7" lengthAdjust="spacingAndGlyphs" stroke="#222" stroke-width="0.22">70</text>
<text x="729.1" y="591.8" font-size="7.2" fill="#222" textLength="7" lengthAdjust="spacingAndGlyphs" stroke="#222" stroke-width="0.22">80</text>
<text x="816.3" y="591.8" font-size="7.2" fill="#222" textLength="7" lengthAdjust="spacingAndGlyphs" stroke="#222" stroke-width="0.22">90</text>
<text x="898.5" y="592" font-size="7.2" fill="#222" textLength="16.4" lengthAdjust="spacingAndGlyphs" stroke="#222" stroke-width="0.22">100%</text>
<rect x="942.3" y="76.6" width="51.5" height="10.8" rx="2" fill="url(#start)" stroke="#3c7fb1" stroke-width="0.8"/>
<text x="959.9" y="84.5" font-size="8.2" fill="#111" textLength="14.9" lengthAdjust="spacingAndGlyphs" stroke="#111" stroke-width="0.22">Start</text>
<circle cx="945" cy="96.7" r="3.3" fill="#e8eef4" stroke="#8a9aaa" stroke-width="0.7"/>
<circle cx="945" cy="96.7" r="1.8" fill="#2a5a8a"/>
<circle cx="945" cy="106" r="3.3" fill="#f0f0f0" stroke="#9a9a9a" stroke-width="0.7"/>
<text x="951.5" y="99.6" font-size="8" fill="#111" textLength="14.8" lengthAdjust="spacingAndGlyphs" stroke="#111" stroke-width="0.22">Read</text>
<text x="951.5" y="108.8" font-size="8" fill="#111" textLength="14.8" lengthAdjust="spacingAndGlyphs" stroke="#111" stroke-width="0.22">Write</text>
<rect x="930" y="117.7" width="76.4" height="69.7" rx="2" fill="none" stroke="#d5dfe5" stroke-width="0.8"/>
<rect x="933" y="114" width="43" height="6" fill="#fff"/>
<text x="934.9" y="119.3" font-size="8" fill="#111" textLength="39.2" lengthAdjust="spacingAndGlyphs" stroke="#111" stroke-width="0.22">Transfer rate</text>
<text x="934.5" y="128.7" font-size="8" fill="#111" textLength="26" lengthAdjust="spacingAndGlyphs" stroke="#111" stroke-width="0.22">Minimum</text>
<text x="934.6" y="148.8" font-size="8" fill="#111" textLength="28.1" lengthAdjust="spacingAndGlyphs" stroke="#111" stroke-width="0.22">Maximum</text>
<text x="934.6" y="168.6" font-size="8" fill="#111" textLength="25.4" lengthAdjust="spacingAndGlyphs" stroke="#111" stroke-width="0.22">Average:</text>
<rect x="934.6" y="133.5" width="65" height="7.8" fill="#000"/>
<rect x="934.6" y="153.6" width="65" height="7.8" fill="#000"/>
<rect x="934.6" y="173.4" width="65" height="7.8" fill="#000"/>
<text x="941.9" y="139.9" font-size="7.6" fill="#3aaee6" textLength="49.9" lengthAdjust="spacingAndGlyphs" font-weight="bold" stroke="#3aaee6" stroke-width="0.15">122.1 MB/sec</text>
<text x="941.9" y="160" font-size="7.6" fill="#3aaee6" textLength="49.9" lengthAdjust="spacingAndGlyphs" font-weight="bold" stroke="#3aaee6" stroke-width="0.15">223.2 MB/sec</text>
<text x="941.9" y="179.8" font-size="7.6" fill="#3aaee6" textLength="49.9" lengthAdjust="spacingAndGlyphs" font-weight="bold" stroke="#3aaee6" stroke-width="0.15">187.9 MB/sec</text>
<text x="934.7" y="198.9" font-size="8" fill="#111" textLength="39.1" lengthAdjust="spacingAndGlyphs" stroke="#111" stroke-width="0.22">Access time:</text>
<text x="934.7" y="222.5" font-size="8" fill="#111" textLength="30.3" lengthAdjust="spacingAndGlyphs" stroke="#111" stroke-width="0.22">Burst rate</text>
<text x="934.1" y="246.3" font-size="8" fill="#111" textLength="34.3" lengthAdjust="spacingAndGlyphs" stroke="#111" stroke-width="0.22">CPU usage</text>
<rect x="934.7" y="203.2" width="64.7" height="7.6" fill="#000"/>
<rect x="934.7" y="226.6" width="64.7" height="7.6" fill="#000"/>
<rect x="934.7" y="250.3" width="64.7" height="7.6" fill="#000"/>
<text x="953" y="209.4" font-size="7.6" fill="#f0f040" textLength="27.2" lengthAdjust="spacingAndGlyphs" font-weight="bold" stroke="#f0f040" stroke-width="0.15">15.1 ms</text>
<text x="942.4" y="232.9" font-size="7.6" fill="#fff" textLength="49.3" lengthAdjust="spacingAndGlyphs" font-weight="bold" stroke="#fff" stroke-width="0.15">142.5 MB/sec</text>
<text x="958.4" y="256.2" font-size="7.6" fill="#fff" textLength="17.9" lengthAdjust="spacingAndGlyphs" font-weight="bold" stroke="#fff" stroke-width="0.15">11.1%</text>
<!-- taskbar -->
<rect x="5" y="619.8" width="1014" height="5.2" fill="url(#task)"/>
<rect x="5" y="618.2" width="1014" height="1.6" fill="#f8f8f8"/>
<circle cx="24" cy="632.5" r="12.3" fill="#7a9ab0" stroke="#0a1218" stroke-width="1.4"/>
<circle cx="20" cy="627.5" r="4.2" fill="#d0602a"/><circle cx="27" cy="627.5" r="3.2" fill="#60a050"/>
<rect x="82" y="621.3" width="94" height="8" rx="2" fill="#9c9c9c" stroke="#5e5e5e" stroke-width="0.7"/>
<rect x="179" y="621.3" width="93" height="8" rx="2" fill="#9c9c9c" stroke="#5e5e5e" stroke-width="0.7"/>
<rect x="275" y="621.3" width="94" height="8" rx="2" fill="#9c9c9c" stroke="#5e5e5e" stroke-width="0.7"/>
<rect x="372" y="621.3" width="93" height="8" rx="2" fill="#9c9c9c" stroke="#5e5e5e" stroke-width="0.7"/>
<rect x="468" y="621.3" width="94" height="8" rx="2" fill="#9c9c9c" stroke="#5e5e5e" stroke-width="0.7"/>
<rect x="565" y="621.3" width="95" height="8" rx="2" fill="#3a3a3a" stroke="#161616" stroke-width="0.7"/>
<rect x="72.5" y="622" width="1.2" height="3" fill="#ddd"/><rect x="75" y="622" width="1.2" height="3" fill="#ddd"/>
<rect x="796" y="622.5" width="6" height="3" fill="#b83838"/>
<rect x="813" y="622.5" width="3" height="3" fill="#9aa0a8"/>
<rect x="819" y="622.5" width="3" height="3" fill="#9aa0a8"/>
<rect x="830" y="622.5" width="4" height="3" fill="#6a80a0"/>
<rect x="848" y="622.5" width="4" height="3" fill="#8a8a8a"/>
<rect x="872" y="622.5" width="16" height="3" fill="#c8c8c8"/>
<rect x="890" y="622.5" width="5" height="3" fill="#b0b0b0"/>
<rect x="922" y="622.5" width="6" height="3" fill="#60b060"/>
<rect x="930" y="622.5" width="6" height="3" fill="#90a8c0"/>
<rect x="943" y="622.5" width="7" height="3" fill="#50a050"/>
<rect x="953" y="622.5" width="4" height="3" fill="#909090"/>
<rect x="970" y="622.5" width="6" height="3" fill="#7a90b0"/>
<rect x="980" y="622.5" width="2" height="3" fill="#aaa"/>
</svg>
</body></html>
